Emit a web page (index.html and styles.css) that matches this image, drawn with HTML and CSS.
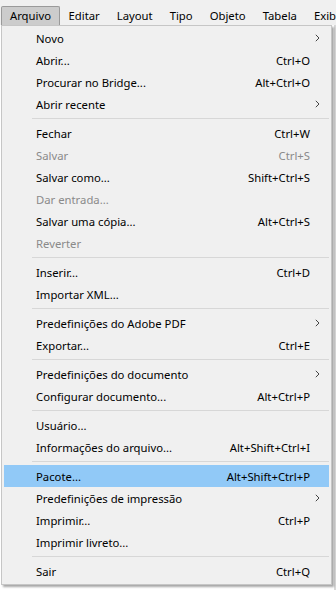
FILE: index.html
```html
<!DOCTYPE html>
<html lang="pt">
<head>
<meta charset="utf-8">
<title>Arquivo</title>
<link rel="stylesheet" href="styles.css">
</head>
<body>
<div class="app">
  <nav class="menubar">
    <span class="top-item active">Arquivo</span>
    <span class="top-item">Editar</span>
    <span class="top-item">Layout</span>
    <span class="top-item">Tipo</span>
    <span class="top-item">Objeto</span>
    <span class="top-item">Tabela</span>
    <span class="top-item last">Exibir</span>
  </nav>
  <div class="workspace">
    <ul class="menu">
      <li class="item sub"><span class="label">Novo</span><svg class="chev" width="5" height="8" viewBox="0 0 5 8"><path d="M0.8 0.8 L4 4 L0.8 7.2" fill="none" stroke="#444" stroke-width="1"/></svg></li>
      <li class="item"><span class="label">Abrir...</span><span class="key">Ctrl+O</span></li>
      <li class="item"><span class="label">Procurar no Bridge...</span><span class="key">Alt+Ctrl+O</span></li>
      <li class="item sub"><span class="label">Abrir recente</span><svg class="chev" width="5" height="8" viewBox="0 0 5 8"><path d="M0.8 0.8 L4 4 L0.8 7.2" fill="none" stroke="#444" stroke-width="1"/></svg></li>
      <li class="sep"></li>
      <li class="item"><span class="label">Fechar</span><span class="key">Ctrl+W</span></li>
      <li class="item disabled"><span class="label">Salvar</span><span class="key">Ctrl+S</span></li>
      <li class="item"><span class="label">Salvar como...</span><span class="key">Shift+Ctrl+S</span></li>
      <li class="item disabled"><span class="label">Dar entrada...</span></li>
      <li class="item"><span class="label">Salvar uma cópia...</span><span class="key">Alt+Ctrl+S</span></li>
      <li class="item disabled"><span class="label">Reverter</span></li>
      <li class="sep"></li>
      <li class="item"><span class="label">Inserir...</span><span class="key">Ctrl+D</span></li>
      <li class="item"><span class="label">Importar XML...</span></li>
      <li class="sep"></li>
      <li class="item sub"><span class="label">Predefinições do Adobe PDF</span><svg class="chev" width="5" height="8" viewBox="0 0 5 8"><path d="M0.8 0.8 L4 4 L0.8 7.2" fill="none" stroke="#444" stroke-width="1"/></svg></li>
      <li class="item"><span class="label">Exportar...</span><span class="key">Ctrl+E</span></li>
      <li class="sep"></li>
      <li class="item sub"><span class="label">Predefinições do documento</span><svg class="chev" width="5" height="8" viewBox="0 0 5 8"><path d="M0.8 0.8 L4 4 L0.8 7.2" fill="none" stroke="#444" stroke-width="1"/></svg></li>
      <li class="item"><span class="label">Configurar documento...</span><span class="key">Alt+Ctrl+P</span></li>
      <li class="sep"></li>
      <li class="item"><span class="label">Usuário...</span></li>
      <li class="item"><span class="label">Informações do arquivo...</span><span class="key">Alt+Shift+Ctrl+I</span></li>
      <li class="sep"></li>
      <li class="item hover"><span class="label">Pacote...</span><span class="key">Alt+Shift+Ctrl+P</span></li>
      <li class="item sub"><span class="label">Predefinições de impressão</span><svg class="chev" width="5" height="8" viewBox="0 0 5 8"><path d="M0.8 0.8 L4 4 L0.8 7.2" fill="none" stroke="#444" stroke-width="1"/></svg></li>
      <li class="item"><span class="label">Imprimir...</span><span class="key">Ctrl+P</span></li>
      <li class="item"><span class="label">Imprimir livreto...</span></li>
      <li class="sep"></li>
      <li class="item"><span class="label">Sair</span><span class="key">Ctrl+Q</span></li>
    </ul>
  </div>
</div>
</body>
</html>
```
FILE: styles.css
```css
html, body {
  margin: 0;
  padding: 0;
  background: #ffffff;
}
body {
  font-family: "Noto Sans", "Open Sans", "DejaVu Sans", sans-serif;
  font-size: 11.3px;
  color: #000;
  overflow: hidden;
}
.app {
  width: 336px;
  height: 590px;
  overflow: hidden;
}
.menubar {
  height: 25px;
  background: #f0f0f0;
  display: flex;
  align-items: flex-end;
  padding-left: 1px;
  white-space: nowrap;
  overflow: hidden;
}
.top-item {
  flex: none;
  height: 19px;
  line-height: 18px;
  padding: 0 7.5px;
  border: 1px solid transparent;
  border-bottom: none;
  box-sizing: border-box;
  color: #000;
}
.top-item.active {
  background: #cccccc;
  border-color: #9a9a9a;
  border-radius: 2px 2px 0 0;
  width: 59px;
  text-align: center;
}
.workspace {
  height: 565px;
  background: #ffffff;
  border-right: 2px solid #d9d9d9;
  box-sizing: border-box;
}
.menu {
  list-style: none;
  margin: 0 0 0 1px;
  padding: 1px 2px 2px 2px;
  width: 331px;
  box-sizing: border-box;
  background: #f0f0f0;
  border: 1px solid #c6c6c6;
  box-shadow: 2px 2px 2px rgba(0, 0, 0, 0.35);
}
.item {
  height: 22px;
  display: flex;
  align-items: center;
  padding: 0 19px 0 32px;
  position: relative;
  white-space: nowrap;
}
.item .label {
  flex: 1;
}
.item .key {
  text-align: right;
}
.item.disabled {
  color: #8a8a8a;
}
.item.hover {
  background: #91c9f7;
}
.chev {
  position: absolute;
  right: 9px;
  top: 7px;
}
.sep {
  height: 1px;
  background: #d7d7d7;
  margin: 3px 0 3px 28px;
}
```
